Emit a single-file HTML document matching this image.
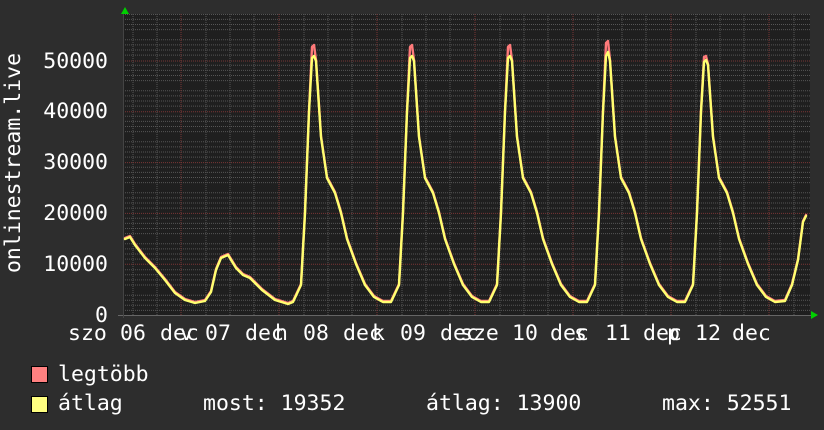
<!DOCTYPE html>
<html><head><meta charset="utf-8"><style>
html,body{margin:0;padding:0;background:#2d2d2d;width:824px;height:430px;overflow:hidden}
svg{display:block}
text{font-family:"DejaVu Sans Mono","Liberation Mono",monospace;fill:#fff;font-size:21.5px}
</style></head><body>
<svg width="824" height="430" viewBox="0 0 824 430">
<rect x="0" y="0" width="824" height="430" fill="#2d2d2d"/>
<rect x="123" y="14" width="687" height="301" fill="#1f1f1f"/>
<g stroke="#555" stroke-width="1" stroke-dasharray="1,1">
<path d="M123 310.4H810M123 305.3H810M123 300.2H810M123 295.2H810M123 285H810M123 279.9H810M123 274.8H810M123 269.7H810M123 259.1H810M123 254H810M123 248.9H810M123 243.8H810M123 233.6H810M123 228.5H810M123 223.4H810M123 218.3H810M123 208.1H810M123 203H810M123 197.9H810M123 192.8H810M123 182.6H810M123 177.5H810M123 172.4H810M123 167.3H810M123 157.1H810M123 152H810M123 146.9H810M123 141.8H810M123 131.6H810M123 126.5H810M123 121.4H810M123 116.3H810M123 106.1H810M123 101H810M123 95.9H810M123 90.8H810M123 80.6H810M123 75.5H810M123 70.4H810M123 65.3H810M123 55.1H810M123 50H810M123 44.9H810M123 39.8H810M123 29.6H810M123 24.5H810M123 19.4H810M123 14.5H810"/>
<path d="M133 14V315M157 14V315M206 14V315M230 14V315M254 14V315M304 14V315M328 14V315M352 14V315M402 14V315M426 14V315M450 14V315M500 14V315M524 14V315M548 14V315M598 14V315M622 14V315M646 14V315M696 14V315M720 14V315M744 14V315M794 14V315"/>
</g>
<g stroke="#7a3535" stroke-width="1" stroke-dasharray="1,1">
<path d="M123 264.2H810M123 213.4H810M123 162.6H810M123 111.8H810M123 61H810"/>
<path d="M181 14V315M279 14V315M377 14V315M475 14V315M573 14V315M671 14V315M769 14V315"/>
</g>
<path d="M118 315.5H812" stroke="#666" stroke-width="1"/>
<path d="M123.5 14V318" stroke="#444" stroke-width="1"/>
<polygon points="125,7 121,14 129,14" fill="#00d000"/>
<polygon points="818,315 811,311 811,319" fill="#00d000"/>
<g fill="none" stroke-linejoin="round" stroke-linecap="round">
<path stroke="#ff7a7a" stroke-width="2.4" transform="translate(0,-1)" d="M125 239L130 237L135 245L145 258L155 268L165 280L175 293L185 300L195 303L205 301L211 292L216 270L221 258L228 255L236 268L243 275L250 278L262 290L275 300L288 304L293 302L301 285L305 213L309 112L312 48L314 46L316 61L321 137L327 178L335 193L341 213L347 239L356 264L365 285L374 297L383 302L391 302L399 285L403 213L407 112L410 48L412 46L414 61L419 137L425 178L433 193L439 213L445 239L454 264L463 285L472 297L481 302L489 302L497 285L501 213L505 112L508 48L510 46L512 61L517 137L523 178L531 193L537 213L543 239L552 264L561 285L570 297L579 302L587 302L595 285L599 213L603 112L606 44L608 42L610 61L615 137L621 178L629 193L635 213L641 239L650 264L659 285L668 297L677 302L685 302L693 285L697 213L701 112L704 58L706 57L708 65L713 137L719 178L727 193L733 213L739 239L748 264L757 285L766 297L775 302L785 301L792 285L798 260L803 222L806 216"/>
<path stroke="#ffff70" stroke-width="2.4" d="M125 239L130 237L135 245L145 258L155 268L165 280L175 293L185 300L195 303L205 301L211 292L216 270L221 258L228 255L236 268L243 275L250 278L262 290L275 300L288 304L293 302L301 285L305 213L309 112L312 58L314 56L316 61L321 137L327 178L335 193L341 213L347 239L356 264L365 285L374 297L383 302L391 302L399 285L403 213L407 112L410 58L412 56L414 61L419 137L425 178L433 193L439 213L445 239L454 264L463 285L472 297L481 302L489 302L497 285L501 213L505 112L508 58L510 56L512 61L517 137L523 178L531 193L537 213L543 239L552 264L561 285L570 297L579 302L587 302L595 285L599 213L603 112L606 56L608 52L610 61L615 137L621 178L629 193L635 213L641 239L650 264L659 285L668 297L677 302L685 302L693 285L697 213L701 112L704 62L706 60L708 65L713 137L719 178L727 193L733 213L739 239L748 264L757 285L766 297L775 302L785 301L792 285L798 260L803 222L806 216"/>
</g>
<g text-anchor="end">
<text x="108" y="322">0</text>
<text x="108" y="271">10000</text>
<text x="108" y="220">20000</text>
<text x="108" y="169">30000</text>
<text x="108" y="118">40000</text>
<text x="108" y="68">50000</text>
</g>
<text transform="translate(20,163) rotate(-90)" text-anchor="middle">onlinestream.live</text>
<g>
<text x="68" y="340">szo</text>
<text x="120" y="340">06</text><text x="160" y="340">dec</text><text x="180" y="340">v</text>
<text x="205" y="340">07</text><text x="245" y="340">dec</text><text x="275" y="340">h</text>
<text x="303" y="340">08</text><text x="343" y="340">dec</text><text x="372" y="340">k</text>
<text x="400" y="340">09</text><text x="440" y="340">dec</text><text x="460" y="340">sze</text>
<text x="512" y="340">10</text><text x="550" y="340">dec</text><text x="574" y="340">s</text>
<text x="605" y="340">11</text><text x="643" y="340">dec</text><text x="667" y="340">p</text>
<text x="695" y="340">12</text><text x="732" y="340">dec</text>
</g>
<rect x="31.5" y="366.5" width="16" height="16" fill="#ff8080" stroke="#000"/>
<rect x="31.5" y="396.5" width="16" height="16" fill="#ffff80" stroke="#000"/>
<text x="58" y="381">legtöbb</text>
<text x="58" y="410">átlag</text>
<text x="203" y="410">most: 19352</text>
<text x="426" y="410">átlag: 13900</text>
<text x="662" y="410">max: 52551</text>
</svg>
</body></html>
